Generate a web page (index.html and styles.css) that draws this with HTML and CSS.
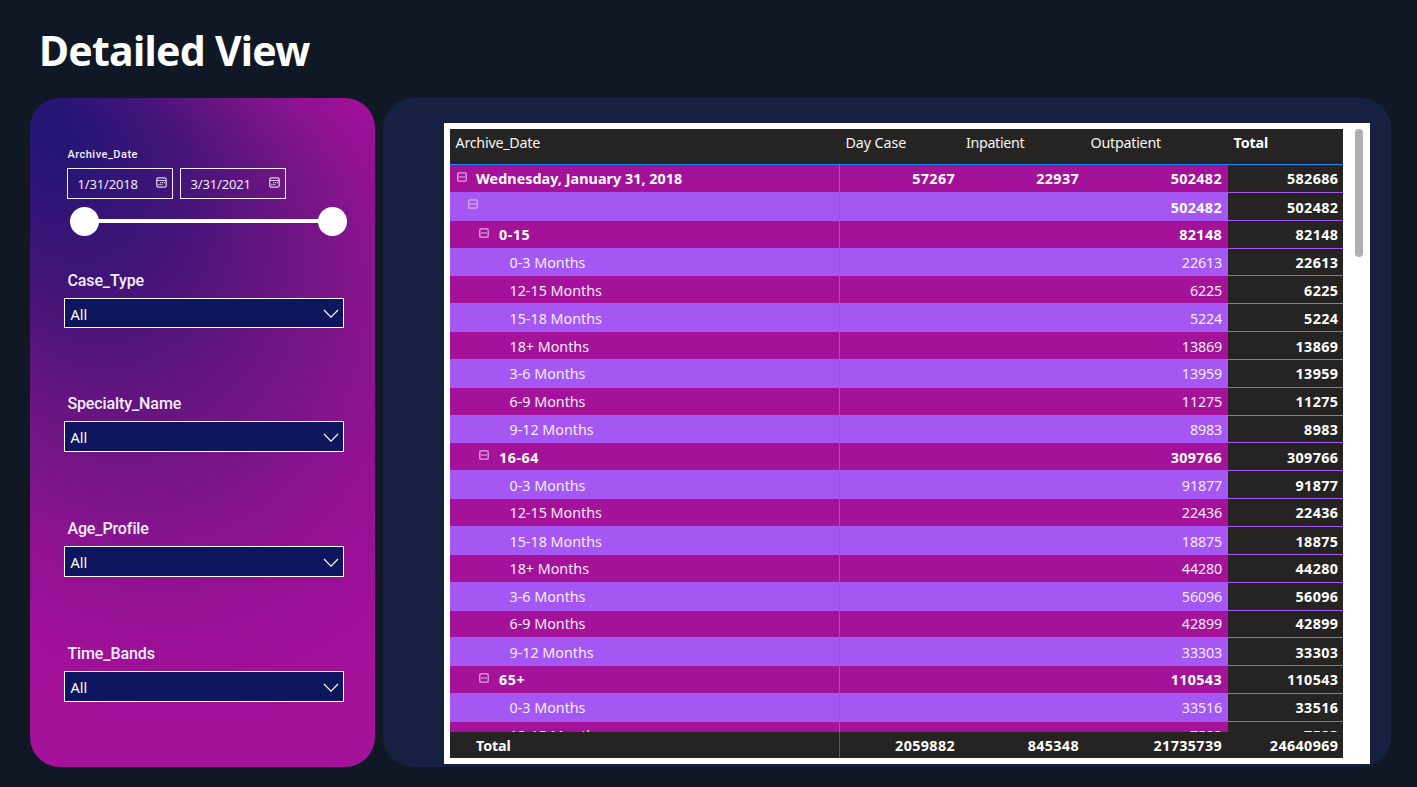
FILE: index.html
```html
<!DOCTYPE html>
<html lang="en">
<head>
<meta charset="utf-8">
<title>Detailed View</title>
<link rel="stylesheet" href="styles.css">
</head>
<body>
<svg class="defs" width="0" height="0">
  <symbol id="calendar" viewBox="0 0 11 11"><rect x=".8" y=".8" width="9.4" height="9.4" rx="1.8" fill="none" stroke="currentColor" stroke-width="1.3"/><path d="M.8 3.5h9.4" stroke="currentColor" stroke-width="1.1"/><path d="M4 5.6h5M2.3 7.7h4.5" stroke="currentColor" stroke-width="1.3" stroke-dasharray="1.3 .7"/></symbol>
  <symbol id="chevron" viewBox="0 0 16 10"><path d="M1 1l7 7.2L15 1" fill="none" stroke="currentColor" stroke-width="1.2"/></symbol>
  <symbol id="minus" viewBox="0 0 10 10"><rect x=".8" y=".8" width="8.4" height="8.4" rx="1" fill="none" stroke="currentColor" stroke-width="1.3"/><path d="M2 5h6" stroke="currentColor" stroke-width="1.1"/></symbol>
</svg>
<h1 class="title"><span>Detailed View</span></h1>
<main class="panels">
  <aside class="filters">
    <svg class="glow" viewBox="0 0 345 669" preserveAspectRatio="none">
      <defs><radialGradient id="g" gradientUnits="userSpaceOnUse" cx="0" cy="0" r="1" fx="-.489" fy="-.745" gradientTransform="translate(167 283) scale(321 364)">
        <stop offset="0" stop-color="#231573"/><stop offset=".1" stop-color="#291574"/><stop offset=".3" stop-color="#451479"/><stop offset=".5" stop-color="#691581"/><stop offset=".7" stop-color="#8a1490"/><stop offset=".74" stop-color="#911192"/><stop offset=".9" stop-color="#a01098"/><stop offset="1" stop-color="#a5129a"/>
      </radialGradient></defs>
      <rect width="345" height="669" fill="url(#g)"/>
    </svg>
    <section class="date">
      <h2 class="label small">Archive_Date</h2>
      <div class="dates">
        <div class="field"><span>1/31/2018</span><svg><use href="#calendar"/></svg></div>
        <div class="field"><span>3/31/2021</span><svg><use href="#calendar"/></svg></div>
      </div>
      <div class="slider"><i></i><i></i></div>
    </section>
    <section class="slicer"><h2 class="label">Case_Type</h2><div class="select short"><span>All</span><svg><use href="#chevron"/></svg></div></section>
    <section class="slicer"><h2 class="label">Specialty_Name</h2><div class="select"><span>All</span><svg><use href="#chevron"/></svg></div></section>
    <section class="slicer"><h2 class="label">Age_Profile</h2><div class="select"><span>All</span><svg><use href="#chevron"/></svg></div></section>
    <section class="slicer"><h2 class="label">Time_Bands</h2><div class="select"><span>All</span><svg><use href="#chevron"/></svg></div></section>
  </aside>
  <section class="report">
    <div class="visual">
      <div class="matrix">
        <div class="row head"><span>Archive_Date</span><span>Day Case</span><span>Inpatient</span><span>Outpatient</span><b>Total</b></div>
        <div class="body" id="body"></div>
        <div class="row foot"><span>Total</span><span>2059882</span><span>845348</span><span>21735739</span><span>24640969</span></div>
      </div>
      <div class="scroll"></div>
    </div>
  </section>
</main>
<script src="table.js"></script>
</body>
</html>
```
FILE: table.js
```js
// Each row: level, label, day case, inpatient, outpatient, total
const rows = [
  [0, 'Wednesday, January 31, 2018', '57267', '22937', '502482', '582686'],
  [1, '', '', '', '502482', '502482'],
  [2, '0-15', '', '', '82148', '82148'],
  [3, '0-3 Months', '', '', '22613', '22613'],
  [3, '12-15 Months', '', '', '6225', '6225'],
  [3, '15-18 Months', '', '', '5224', '5224'],
  [3, '18+ Months', '', '', '13869', '13869'],
  [3, '3-6 Months', '', '', '13959', '13959'],
  [3, '6-9 Months', '', '', '11275', '11275'],
  [3, '9-12 Months', '', '', '8983', '8983'],
  [2, '16-64', '', '', '309766', '309766'],
  [3, '0-3 Months', '', '', '91877', '91877'],
  [3, '12-15 Months', '', '', '22436', '22436'],
  [3, '15-18 Months', '', '', '18875', '18875'],
  [3, '18+ Months', '', '', '44280', '44280'],
  [3, '3-6 Months', '', '', '56096', '56096'],
  [3, '6-9 Months', '', '', '42899', '42899'],
  [3, '9-12 Months', '', '', '33303', '33303'],
  [2, '65+', '', '', '110543', '110543'],
  [3, '0-3 Months', '', '', '33516', '33516'],
  [3, '12-15 Months', '', '', '7583', '7583']
];
document.getElementById('body').innerHTML = rows.map(([level, label, ...values]) => {
  const icon = level < 3 ? '<svg class="toggle"><use href="#minus"/></svg>' : '';
  const text = label ? `<em>${label}</em>` : '';
  return `<div class="row level${level}"><span>${icon}${text}</span>${values.map(v => `<span>${v}</span>`).join('')}</div>`;
}).join('');
```
FILE: styles.css
```css
* { box-sizing: border-box; }
body { margin: 0; width: 1417px; height: 787px; overflow: hidden; background: #101725; color: #fff; font-family: "Noto Sans", "Open Sans", sans-serif; }
.defs { position: absolute; }
.title { margin: 0; height: 98px; padding: 21px 0 0 39px; font-size: 41px; line-height: 58px; font-weight: 700; letter-spacing: -.72px; }
.panels { display: flex; gap: 8px; padding-left: 30px; }
.filters { position: relative; width: 345px; height: 669px; border-radius: 30px; overflow: hidden; padding: 48px 0 0 34px; display: flex; flex-direction: column; }
.glow { position: absolute; inset: 0; width: 345px; height: 669px; }
.date, .slicer { position: relative; }
.date { height: 123px; }
.label { margin: 0; padding-left: 3.4px; font: 500 16px/24px Roboto, sans-serif; letter-spacing: -.1px; color: #f5eefa; }
.label.small { font-size: 11px; line-height: 18px; letter-spacing: .5px; }
.dates { display: flex; gap: 7px; padding: 4px 0 0 3px; }
.field { width: 106px; height: 31px; border: 1px solid #f4eef8; display: flex; justify-content: space-between; padding: 0 5px 0 9.5px; font-size: 13px; line-height: 31px; color: #f1e9f7; letter-spacing: -.15px; }
.field svg { width: 11px; height: 11px; margin-top: 8px; color: #ddcfe8; }
.slider { display: flex; justify-content: space-between; align-items: center; width: 277px; height: 29px; margin: 8px 0 0 6px; background: linear-gradient(#fff, #fff) 14px 12px / 249px 4px no-repeat; }
.slider i { width: 29px; height: 29px; border-radius: 50%; background: #fff; }
.slicer { height: 125px; }
.date + .slicer { height: 123px; }
.select { width: 280px; height: 31px; margin-top: 5px; padding: 0 4px 0 5.5px; display: flex; justify-content: space-between; align-items: center; background: #0e1660; border: 1px solid #fff; font-size: 14.5px; }
.select.short { height: 30px; }
.select span { padding-top: 1px; }
.select.short span { padding-top: 2px; }
.select svg { width: 16px; height: 10px; margin-top: 2px; }
.report { width: 1008px; height: 669px; border-radius: 30px; background: #162141; padding: 25px 0 0 61px; }
.visual { width: 926px; height: 641px; background: #fff; padding: 6px; display: flex; gap: 12px; }
.matrix { width: 893px; height: 629px; background: #252423; font-size: 14.3px; }
.row { display: grid; grid-template-columns: 390px 121px 124px 143px 115px; }
.head { height: 36px; border-bottom: 1px solid #118dff; line-height: 27px; color: #f5f5f5; letter-spacing: -.25px; }
.head > * { padding-left: 5.5px; }
.head > :nth-child(2) { letter-spacing: -.1px; }
.head > :nth-child(3) { letter-spacing: -.35px; padding-left: 5px; }
.head b { color: #fff; letter-spacing: -.1px; }
.body { height: 567px; overflow: hidden; }
.body .row { height: 28px; line-height: 27px; }
.body .row:nth-child(4), .body .row:nth-child(10), .body .row:nth-child(17) { height: 27px; }
/* Baselines of rows whose text sits on the lower half pixel */
.body .row:is(:nth-child(2), :nth-child(5), :nth-child(6), :nth-child(7), :nth-child(11), :nth-child(12), :nth-child(14), :nth-child(18)) { line-height: 29px; }
.body .row:nth-child(17) { line-height: 25px; }
.body .row > span { height: 100%; min-height: 0; border-bottom: 1px solid #a457f2; background: #a5129a; text-align: right; padding-right: 6px; letter-spacing: -.15px; color: #f6ebfb; }
.body .row { grid-template-rows: 100%; }
.body .row:nth-child(even) > span { background: #a457f2; }
.body .row > span:first-child { display: flex; letter-spacing: 0; background-image: linear-gradient(#2b80fa, #2b80fa); background-position: right top; background-size: 1px 100%; background-repeat: no-repeat; }
.body .row > span:last-child { background: #252423; font-weight: 700; color: #fff; letter-spacing: .38px; padding-right: 4.7px; }
.body .row:is(.level0, .level1, .level2) > span { font-weight: 700; color: #fff; letter-spacing: .38px; }
.body .row:nth-child(even) > span:first-child { background: linear-gradient(#2b80fa, #2b80fa) right top / 1px 100% no-repeat #a457f2; }
.row em { font-style: normal; }
.toggle { width: 10px; height: 10px; margin: 7px 12px 0 0; color: #deaae4; }
.level0 > span:first-child { padding-left: 7px; }
.level0 .toggle { margin-right: 9px; }
.level0 em { letter-spacing: .06px; }
.level1 > span:first-child { padding-left: 18px; }
.level1 .toggle { margin-top: 6px; }
.level2 > span:first-child { padding-left: 29px; }
.level2 .toggle { margin-right: 10px; }
.level2 em { letter-spacing: .55px; }
.level3 > span:first-child { padding-left: 59.5px; }
.foot { height: 26px; line-height: 27px; font-weight: 700; letter-spacing: .38px; }
.foot span { text-align: right; padding-right: 6px; }
.foot span:first-child { text-align: left; padding-left: 26px; border-right: 1px solid #2468a8; letter-spacing: -.1px; height: 26px; }
.foot span:last-child { padding-right: 4.7px; }
.scroll { width: 8px; height: 128px; border-radius: 4px; background: #afafaf; }
```
